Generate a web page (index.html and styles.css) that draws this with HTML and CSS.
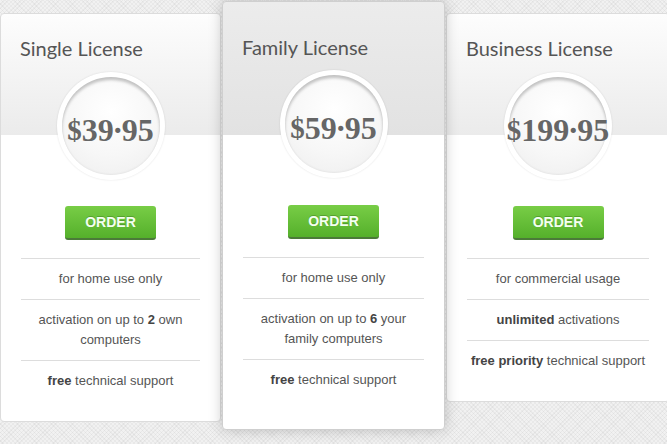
FILE: index.html
```html
<!DOCTYPE html>
<html>
<head>
<meta charset="utf-8">
<link rel="stylesheet" href="styles.css">
</head>
<body>
<div class="plans">
  <div class="plan">
    <h2 class="plan-title">Single License</h2>
    <div class="price-ring"><div class="price"><span class="cur">$</span>39<span class="dot">.</span>95</div></div>
    <a class="order" href="#">ORDER</a>
    <ul class="features">
      <li>for home use only</li>
      <li>activation on up to <b>2</b> own computers</li>
      <li><b>free</b> technical support</li>
    </ul>
  </div>
  <div class="plan featured">
    <h2 class="plan-title">Family License</h2>
    <div class="price-ring"><div class="price"><span class="cur">$</span>59<span class="dot">.</span>95</div></div>
    <a class="order" href="#">ORDER</a>
    <ul class="features">
      <li>for home use only</li>
      <li>activation on up to <b>6</b> your family computers</li>
      <li><b>free</b> technical support</li>
    </ul>
  </div>
  <div class="plan last">
    <h2 class="plan-title">Business License</h2>
    <div class="price-ring"><div class="price"><span class="cur">$</span>199<span class="dot">.</span>95</div></div>
    <a class="order" href="#">ORDER</a>
    <ul class="features">
      <li>for commercial usage</li>
      <li><b>unlimited</b> activations</li>
      <li><b>free priority</b> technical support</li>
    </ul>
  </div>
</div>
</body>
</html>
```
FILE: styles.css
```css
html, body {
  margin: 0;
  padding: 0;
}
body {
  width: 667px;
  height: 444px;
  overflow: hidden;
  font-family: "Liberation Sans", Arial, sans-serif;
  background:
    repeating-linear-gradient(45deg, rgba(0,0,0,0) 0 2px, rgba(0,0,0,0.035) 2px 3px),
    repeating-linear-gradient(-45deg, rgba(0,0,0,0) 0 2px, rgba(0,0,0,0.035) 2px 3px),
    #f1f1f1;
}
.plans {
  display: flex;
  align-items: flex-start;
}
.plan {
  flex: none;
  box-sizing: border-box;
  width: 221px;
  margin-top: 13px;
  padding: 22px 20px 20px;
  border: 1px solid #dcdcdc;
  border-radius: 4px;
  background:
    linear-gradient(#fdfdfd, #ebebeb) no-repeat top left / 100% 121px,
    #ffffff;
  display: flex;
  flex-direction: column;
  align-items: center;
}
.plan.featured {
  position: relative;
  z-index: 2;
  width: 223px;
  margin-top: 1px;
  margin-left: 1px;
  padding-top: 33px;
  padding-bottom: 29px;
  border-color: #cfcfcf;
  background:
    linear-gradient(#ececec, #e2e2e2) no-repeat top left / 100% 133px,
    #ffffff;
  box-shadow: 0 0 14px rgba(0, 0, 0, 0.22);
}
.plan.last {
  width: 224px;
  margin-left: 1px;
}
.plan-title {
  align-self: stretch;
  margin: 0 0 12px -1px;
  font-family: Lato, "Open Sans", sans-serif;
  font-weight: 400;
  font-size: 20px;
  line-height: 24px;
  color: #555;
  letter-spacing: 0;
}
.featured .plan-title {
  margin-bottom: 11px;
}
.price-ring {
  box-sizing: border-box;
  width: 108px;
  height: 108px;
  padding: 5px;
  border-radius: 50%;
  background: #ffffff;
  box-shadow: 0 0 2px rgba(0, 0, 0, 0.12);
}
.price {
  box-sizing: border-box;
  width: 98px;
  height: 98px;
  border-radius: 50%;
  background: radial-gradient(circle at 50% 35%, #ffffff 0%, #f7f7f7 55%, #ededed 100%);
  box-shadow: inset 0 3px 3px rgba(0, 0, 0, 0.22), inset 0 -1px 2px rgba(0, 0, 0, 0.05);
  display: flex;
  align-items: center;
  justify-content: center;
  padding-top: 8px;
  font-family: "Liberation Serif", "Times New Roman", serif;
  font-weight: 700;
  font-size: 32px;
  color: #666;
  letter-spacing: 0;
  white-space: nowrap;
}
.cur {
  font-size: 29px;
}
.dot {
  position: relative;
  top: -8px;
}
.order {
  box-sizing: border-box;
  display: block;
  width: 91px;
  height: 34px;
  margin-top: 26px;
  border-radius: 3px;
  border-bottom: 2px solid #4b7a39;
  background: linear-gradient(#78cd46, #55b02b);
  color: #f4fff0;
  font-family: "Liberation Sans", Arial, sans-serif;
  font-weight: 700;
  font-size: 14px;
  line-height: 32px;
  text-align: center;
  text-decoration: none;
  text-shadow: 0 -1px 0 rgba(40, 90, 20, 0.35);
}
.featured .order {
  margin-top: 27px;
}
.features {
  align-self: stretch;
  list-style: none;
  margin: 18px 0 0;
  padding: 0;
}
.features li {
  border-top: 1px solid #dddddd;
  padding: 10px 0;
  font-size: 13px;
  line-height: 20px;
  color: #555;
  text-align: center;
}
.features b {
  color: #444;
  font-weight: 700;
}
```
